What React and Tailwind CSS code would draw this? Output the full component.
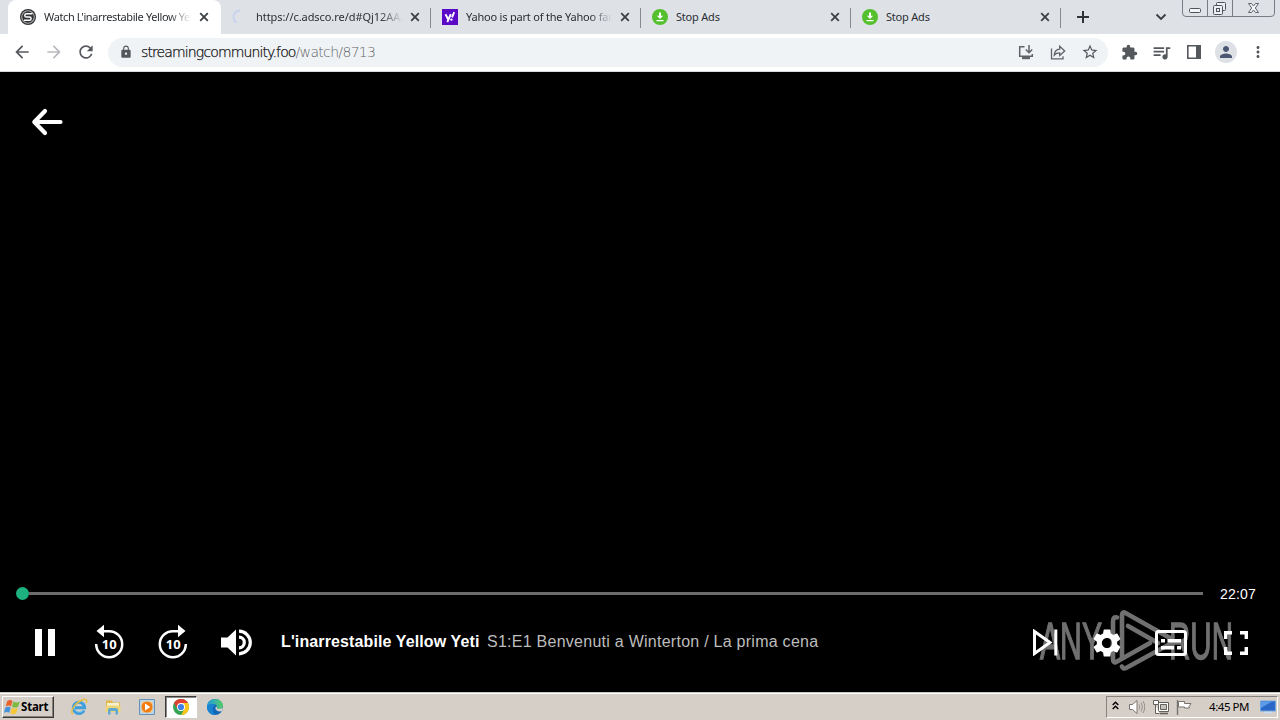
import React from "react";
import {
  MdArrowBack, MdArrowForward, MdRefresh, MdLock, MdStarBorder, MdExtension,
  MdQueueMusic, MdPerson, MdMoreVert, MdSettings,
} from "react-icons/md";

const TAB_FONT = "font-['Noto_Sans',sans-serif]";

function SiteIcon() {
  return (
    <svg width="16" height="16" viewBox="0 0 16 16">
      <circle cx="8" cy="8" r="8" fill="#303234" />
      <circle cx="8" cy="8" r="6.3" fill="none" stroke="#a9abad" strokeWidth="1.1" />
      <path d="M12.500 4.700H6.500a1.700 1.700 0 0 0 0 3.400h3a1.600 1.600 0 0 1 0 3.200H4" fill="none" stroke="#fff" strokeWidth="1.500" />
    </svg>
  );
}

function SpinnerIcon() {
  return (
    <svg width="16" height="16" viewBox="0 0 16 16">
      <path d="M8 1.500a6.500 6.500 0 0 0-3 12.200" fill="none" stroke="#c8d3f0" strokeWidth="1.800" />
    </svg>
  );
}

function YahooIcon() {
  return (
    <svg width="16" height="16" viewBox="0 0 16 16">
      <path d="M0 0h16v16H0z" fill="#5b08c9" />
      <path d="M3.500 5.200l2.600 5M8.800 5.200L5.300 13M12.200 3.200L10 8.400" fill="none" stroke="#fff" strokeWidth="1.900" />
      <circle cx="9.400" cy="10.600" r="1.200" fill="#fff" />
    </svg>
  );
}

function DownloadIcon() {
  return (
    <svg width="16" height="16" viewBox="0 0 16 16">
      <circle cx="8" cy="8" r="8" fill="#55c02e" />
      <path d="M7 3.500h2v3.300h2.200L8 10 4.800 6.800H7zM4.500 11h7v1.300h-7z" fill="#fff" />
    </svg>
  );
}

function CloseIcon() {
  return (
    <svg className="shrink-0" width="10" height="10" viewBox="0 0 10 10">
      <path d="M1.200 1.200l7.600 7.600M8.800 1.200L1.200 8.800" stroke="#3c4043" strokeWidth="1.800" />
    </svg>
  );
}

function Tab({ icon, title, active, faded, tracking, sep }) {
  return (
    <div className={"relative flex h-[34px] shrink-0 items-center " + (active ? "w-[213px] rounded-t-lg bg-white pl-3 pr-3" : "w-[210px] pl-[11px] pr-[11px]")}>
      <span className="w-4 shrink-0">{icon}</span>
      <span className={`ml-[7px] flex-1 overflow-hidden whitespace-nowrap pl-px text-[11px] leading-[18px] text-[#2b2f33] ${TAB_FONT} ${tracking} ${faded ? "[mask-image:linear-gradient(to_right,black_85%,transparent)]" : ""}`}>
        {title}
      </span>
      <span className="ml-2 w-[10px]"><CloseIcon /></span>
      {sep && <span className="absolute right-0 top-2 h-5 w-px bg-[#868b90]" />}
    </div>
  );
}

function WindowButtons() {
  return (
    <svg className="ml-[15px] shrink-0" width="94" height="17" viewBox="0 0 94 17" fill="none" stroke="#777c85">
      <path d="M.5 0v13q0 3.500 3.500 3.500h85q3.500 0 3.500-3.500V0M25.500 0v16M50.500 0v16" />
      <rect x="7.500" y="8.500" width="11" height="4" rx="1" fill="#f4f5f7" stroke="#4f535b" />
      <g fill="#eceef1" stroke="#4f535b">
        <rect x="34.500" y="2.500" width="9" height="8" rx="1" />
        <rect x="31.500" y="5.500" width="9" height="9" rx="1" />
        <rect x="34.500" y="8.500" width="3" height="3" />
      </g>
      <path d="M66.500 3.500h3l2 2.500 2-2.500h3l-3.200 4.500 3.200 4.500h-3l-2-2.500-2 2.500h-3l3.200-4.500z" fill="#f4f5f7" stroke="#5d6169" />
    </svg>
  );
}

function TabStrip() {
  return (
    <div className="flex h-[34px] bg-[#dee1e6] pl-2">
      <Tab active faded icon={<SiteIcon />} title="Watch L'inarrestabile Yellow Yeti" tracking="tracking-[-0.38px]" />
      <Tab faded sep icon={<SpinnerIcon />} title="https://c.adsco.re/d#Qj12AAAA" tracking="tracking-[-0.06px]" />
      <Tab faded sep icon={<YahooIcon />} title="Yahoo is part of the Yahoo fami" tracking="tracking-[-0.2px]" />
      <Tab sep icon={<DownloadIcon />} title="Stop Ads" tracking="tracking-[-0.2px]" />
      <Tab sep icon={<DownloadIcon />} title="Stop Ads" tracking="tracking-[-0.2px]" />
      <div className="flex h-[34px] items-center pl-[15px]">
        <svg width="14" height="14" viewBox="0 0 14 14"><path d="M7 1v12M1 7h12" stroke="#303438" strokeWidth="2" /></svg>
        <svg className="ml-[65px]" width="12" height="8" viewBox="0 0 12 8"><path d="M1.500 1.500L6 6l4.500-4.500" fill="none" stroke="#3c4043" strokeWidth="1.900" /></svg>
      </div>
      <WindowButtons />
    </div>
  );
}

function Toolbar() {
  return (
    <div className="flex h-[38px] items-center border-b border-[#d5d8dc] bg-white pb-px pl-3 text-[#54585d]">
      <MdArrowBack size={20} />
      <MdArrowForward size={20} className="ml-3 text-[#b8babd]" />
      <MdRefresh size={20} className="ml-3" />
      <div className="ml-3 flex h-[29px] w-[1000px] items-center rounded-full bg-[#f0f3f5] pl-[11px]">
        <MdLock size={14} />
        <span className="ml-2 flex-1 whitespace-nowrap font-['DejaVu_Sans',sans-serif] text-[14px] font-extralight leading-5 tracking-[-0.67px] text-[#5f6368]">
          <span className="tracking-[-0.87px] text-black [-webkit-text-stroke:0.25px_#202124]">streamingcommunity.foo</span>/watch/8713
        </span>
        <svg className="mr-[14px]" width="18" height="18" viewBox="0 0 18 18" fill="none" stroke="#5f6368" strokeWidth="1.500">
          <path d="M7.500 3.700H2.700v9.600h12.600V11M12 2v7M8.800 6.500L12 9.700l3.200-3.200" />
          <path d="M5 15h8" strokeWidth="2.400" />
        </svg>
        <svg className="mr-[14px]" width="18" height="18" viewBox="0 0 18 18" fill="none" stroke="#5f6368" strokeWidth="1.300">
          <path d="M2.500 5.500v10.300h11.500v-2.500" />
          <path d="M5.300 12c.3-3.600 2.400-5.500 5.400-5.800V3.300l5 4.700-5 4.500V9.800c-2.400 0-4.100.6-5.400 2.200z" />
        </svg>
        <MdStarBorder size={18} className="mr-[9px]" />
      </div>
      <MdExtension size={17} className="ml-[13px]" />
      <MdQueueMusic size={21} className="ml-[13px]" />
      <svg className="ml-[15px]" width="14" height="14" viewBox="0 0 14 14"><path d="M.8.8h12.400v12.400H.8z" fill="none" stroke="#54585d" strokeWidth="1.600" /><path d="M9 1h4v12H9z" fill="#54585d" /></svg>
      <span className="ml-[14px] flex size-[22px] items-center justify-center rounded-full bg-[#dde1e6]">
        <MdPerson size={18} className="text-[#4b5672]" />
      </span>
      <MdMoreVert size={18} className="ml-3" />
    </div>
  );
}

function SkipArrow({ forward }) {
  return (
    <svg width="32" height="36" viewBox="0 0 32 36">
      <g transform={forward ? "translate(32 0) scale(-1 1)" : undefined}>
        <path d="M3.200 20A13 13 0 1 0 16 7.200H9" fill="none" stroke="#fff" strokeWidth="2.500" />
        <path d="M3.500 7L11 .8v12.400z" fill="#fff" />
      </g>
      <text x="16.300" y="25" textAnchor="middle" fill="#fff" className="font-['Open_Sans',sans-serif] text-[13px] font-bold">10</text>
    </svg>
  );
}

function Watermark() {
  return (
    <svg className="pointer-events-none absolute left-[1036px] top-[536px]" width="200" height="66" viewBox="0 0 200 66">
      <g opacity=".44">
        <g fill="#fff" stroke="#fff" strokeWidth="1.300" className="font-['Liberation_Sans_Narrow','Liberation_Sans',sans-serif] text-[51px]">
          <text x="4" y="51" textLength="62" lengthAdjust="spacingAndGlyphs">ANY</text>
          <text x="133" y="51" textLength="64" lengthAdjust="spacingAndGlyphs">RUN</text>
        </g>
        <g fill="none" stroke="#fff" strokeWidth="4.600" strokeLinejoin="round" strokeLinecap="round">
          <path d="M86 50V7q0-4 4-1.800L134 30q4 3 0 6L90 60q-3 1.500-4-1.500" />
          <path d="M81 9.500q-4-1-4 4V51q0 5 4 2.500L114 35" />
          <path d="M92 18l30 17" />
        </g>
      </g>
    </svg>
  );
}

function Player() {
  return (
    <div className="relative flex h-[620px] flex-col bg-black text-white">
      <svg className="ml-[31px] mt-[35px] shrink-0" width="33" height="30" viewBox="0 0 33 30">
        <path d="M29.500 15H4M14 4L3.300 15 14 26" fill="none" stroke="#fff" strokeWidth="4.200" strokeLinecap="round" strokeLinejoin="round" />
      </svg>
      <div className="flex-1" />
      <div className="flex h-5 items-center pl-4">
        <span className="size-[13px] shrink-0 rounded-full bg-[#1db17f]" />
        <span className="h-[3px] w-[1174px] bg-[#6c6c6c]" />
        <span className="ml-[17px] mt-[2px] font-['Liberation_Sans',Arial,sans-serif] text-[14px] leading-5 tracking-[0.2px]">22:07</span>
      </div>
      <div className="flex h-[89px] items-start pt-[20px]">
        <svg className="ml-[35px] mt-[6px] shrink-0" width="20" height="27" viewBox="0 0 20 27"><path d="M0 0h7v27H0zM13 0h7v27h-7z" fill="#fff" /></svg>
        <span className="ml-[38px] mt-[1px]"><SkipArrow /></span>
        <span className="ml-8 mt-[1px]"><SkipArrow forward /></span>
        <svg className="ml-8 mt-[6px] shrink-0" width="31" height="27" viewBox="0 0 31 27">
          <path d="M0 8.500h6.500L15 .5v26l-8.500-8H0z" fill="#fff" />
          <path d="M18 2.200a11.300 11.300 0 0 1 0 22.600M18 8.200a5.300 5.300 0 0 1 0 10.600" fill="none" stroke="#fff" strokeWidth="3.200" />
        </svg>
        <div className="ml-[29px] mt-[7px] flex w-[560px] whitespace-nowrap font-['Liberation_Sans',Arial,sans-serif] text-[16px] leading-6">
          <span className="w-[206px] font-bold tracking-[0.12px]">L'inarrestabile Yellow Yeti</span>
          <span className="tracking-[0.26px] text-[#bdbdbd]">S1:E1 Benvenuti a Winterton / La prima cena</span>
        </div>
        <svg className="ml-[192px] mt-[6px] shrink-0" width="25" height="27" viewBox="0 0 25 27"><path d="M1.500 2.500L17 13.500 1.500 24.500zM22.800 .5v26" fill="none" stroke="#fff" strokeWidth="3" /></svg>
        <MdSettings size={34} className="ml-8 mt-[3px] shrink-0" />
        <svg className="ml-[31px] mt-[7px] shrink-0" width="32" height="26" viewBox="0 0 32 26">
          <rect x="1.500" y="1.500" width="29" height="23" rx="2" fill="none" stroke="#fff" strokeWidth="3" />
          <path d="M6 9h4v3.500H6zM12.500 9H26v3.500H12.500zM6 16h13v3.500H6zM22 16h4v3.500h-4z" fill="#fff" />
        </svg>
        <svg className="ml-[37px] mt-[8px] shrink-0" width="24" height="24" viewBox="0 0 24 24"><path d="M1.700 8V1.700H8M16 1.700h6.300V8M22.300 16v6.300H16M8 22.300H1.700V16" fill="none" stroke="#fff" strokeWidth="3.400" /></svg>
      </div>
      <Watermark />
    </div>
  );
}

function WindowsFlag() {
  return (
    <svg width="17" height="16" viewBox="0 0 16 15">
      <path d="M3 2q3-2 5 0L6.600 7q-2-1.600-5 0z" fill="#e8622c" />
      <path d="M8.800 2.300q3 1.800 6 0L13.300 7.200q-3 1.700-5.700 0z" fill="#7dbb43" />
      <path d="M1.300 8q3-1.700 5 0L5 13q-2-1.700-5 0z" fill="#4593dc" />
      <path d="M7.300 8.300q3 1.700 5.700 0l-1.400 5q-3 1.700-5.700 0z" fill="#f4c736" />
    </svg>
  );
}

function IeIcon() {
  return (
    <svg width="18" height="18" viewBox="0 0 18 18" fill="none">
      <path d="M14 12.400A5.600 5.600 0 1 1 14.600 9.700H5" stroke="#3f9fdc" strokeWidth="3" />
      <path d="M13.500 12.500A5.600 5.600 0 0 1 4 8" stroke="#7cc8f2" strokeWidth="1" />
      <path d="M3 16C-1 14 5 5 12 2c4-1.700 5.500 0 4.300 3" stroke="#e8bd3d" strokeWidth="1.400" />
    </svg>
  );
}

function FolderIcon() {
  return (
    <svg width="18" height="18" viewBox="0 0 18 18">
      <path d="M2 2.500h6l1 2h7V14H2z" fill="#e0b94a" />
      <path d="M3 5h12v4H3z" fill="#f8f1cf" />
      <path d="M1.500 7.500h15V14h-15z" fill="#efd57a" />
      <path d="M4 16.500V12q0-2 2-2h6q2 0 2 2v4.500h-2.500V13h-5v3.500z" fill="#5fa9d2" />
    </svg>
  );
}

function MediaIcon() {
  return (
    <svg width="16" height="16" viewBox="0 0 16 16">
      <path d="M.5.5h15v15H.5z" fill="#b8d6eb" stroke="#6690b8" />
      <path d="M2.500 2.500h11v11h-11z" fill="#f6c98c" />
      <circle cx="8" cy="8" r="5.500" fill="#f07d10" />
      <path d="M6 4.500L11.300 8 6 11.500z" fill="#fff" />
    </svg>
  );
}

function ChromeIcon() {
  return (
    <svg width="16" height="16" viewBox="0 0 16 16">
      <circle cx="8" cy="8" r="8" fill="#35a352" />
      <path d="M1.070 4A8 8 0 0 1 14.930 4H8L4.540 10z" fill="#df4032" />
      <path d="M14.930 4A8 8 0 0 1 8 16l3.460-6L8 4z" fill="#fbc51b" />
      <circle cx="8" cy="8" r="4" fill="#fff" />
      <circle cx="8" cy="8" r="3.100" fill="#3f7fe8" />
    </svg>
  );
}

function EdgeIcon() {
  return (
    <svg width="16" height="16" viewBox="0 0 16 16">
      <defs>
        <linearGradient id="edgeTop" x1="0" x2="1"><stop stopColor="#209be0" /><stop offset="1" stopColor="#55ce63" /></linearGradient>
      </defs>
      <circle cx="8" cy="8" r="8" fill="#1268b8" />
      <path d="M0 8C0 3 4 0 8 0c5 0 8 3.500 8 6.500 0 3-3.500 4.500-6.300 3.200C11.500 8 9.500 5 6 5 3 5 .5 6.500 0 8z" fill="url(#edgeTop)" />
      <path d="M9.300 7.200q-2 2 .5 4.300 2.700 1.600 5.200.5l1-3.500q-3.500 2.500-6.200.8.8-1-.5-2.100z" fill="#d6d0c8" />
      <path d="M0 8c1-3 7-4 8-1.500-3 1-3.500 5.500 0 9.500C3.500 16 0 12.500 0 8z" fill="#1a83d2" />
    </svg>
  );
}

function Tray() {
  return (
    <div className="flex h-[22px] w-[172px] items-center border border-[#fff] border-l-[#87837c] border-t-[#87837c]">
      <svg className="-mt-[3px] ml-[5px]" width="7" height="9" viewBox="0 0 7 9"><path d="M.7 4L3.500 1.200 6.300 4M.7 8l2.800-2.800L6.300 8" fill="none" stroke="#000" strokeWidth="1.400" /></svg>
      <svg className="ml-[10px]" width="16" height="16" viewBox="0 0 16 16" fill="none" stroke="#77746f">
        <path d="M.5 5.500h3L8 1.500v13l-4.500-4h-3z" fill="#fff" />
        <path d="M10 5.500q1.500 2.500 0 5M12 3.500q3 4.500 0 9M14 2q3.500 6 0 12" stroke="#929089" />
      </svg>
      <svg className="ml-2" width="16" height="16" viewBox="0 0 16 16" fill="#fff" stroke="#64615d">
        <path d="M5.500 3.500h10v9h-10z" /><path d="M7.500 5.500h6v5h-6z" fill="#c4c0ba" />
        <path d="M7 14.500h8" strokeWidth="1.600" /><path d="M.5 1.500h5v4h-5zM2.500 5.500v9h4" />
      </svg>
      <svg className="ml-[7px]" width="17" height="16" viewBox="0 0 17 16" fill="#fff" stroke="#77736e">
        <path d="M2.500 2.500h6v2h6.500l-2 3 .5 1.500h-5V8h-6z" /><path d="M1.500 1v15" strokeWidth="1.400" />
      </svg>
      <span className="ml-4 w-[44px] whitespace-nowrap font-['Noto_Sans',sans-serif] text-[11.500px] leading-4 tracking-[-0.450px] text-black">4:45 PM</span>
      <svg className="ml-[7px]" width="16" height="14" viewBox="0 0 16 14"><path d="M.5 1h15v10H.5z" fill="#2968c6" stroke="#72a4df" /><path d="M1 1.500h11L1 8z" fill="#5b9be7" /><path d="M4 12.500h8" stroke="#c7e0f7" strokeWidth="1.500" /></svg>
    </div>
  );
}

function Taskbar() {
  return (
    <div className="flex h-7 items-center border-t border-[#c9c7c2] bg-[#d6cfc8] pl-[2px] pr-[2px] pt-px shadow-[inset_0_1px_0_#fff]">
      <button className="flex h-[22px] w-[52px] items-center border border-b-[#3c3a38] border-l-white border-r-[#3c3a38] border-t-white pl-px shadow-[inset_-1px_-1px_0_#85817b]">
        <WindowsFlag />
        <span className="font-['Noto_Sans',sans-serif] text-[11.500px] font-bold leading-4 tracking-[-0.200px] text-black">Start</span>
      </button>
      <span className="ml-4"><IeIcon /></span>
      <span className="ml-4"><FolderIcon /></span>
      <span className="ml-[17px]"><MediaIcon /></span>
      <span className="ml-[10px] flex h-[22px] w-[32px] items-center justify-center border border-b-white border-l-[#3c3a38] border-r-white border-t-[#3c3a38] bg-white shadow-[inset_1px_1px_0_#8b8883]"><ChromeIcon /></span>
      <span className="ml-[10px]"><EdgeIcon /></span>
      <span className="flex-1" />
      <Tray />
    </div>
  );
}

export default function App() {
  return (
    <div className="flex h-[720px] w-[1280px] flex-col overflow-hidden bg-black">
      <TabStrip />
      <Toolbar />
      <Player />
      <Taskbar />
    </div>
  );
}
